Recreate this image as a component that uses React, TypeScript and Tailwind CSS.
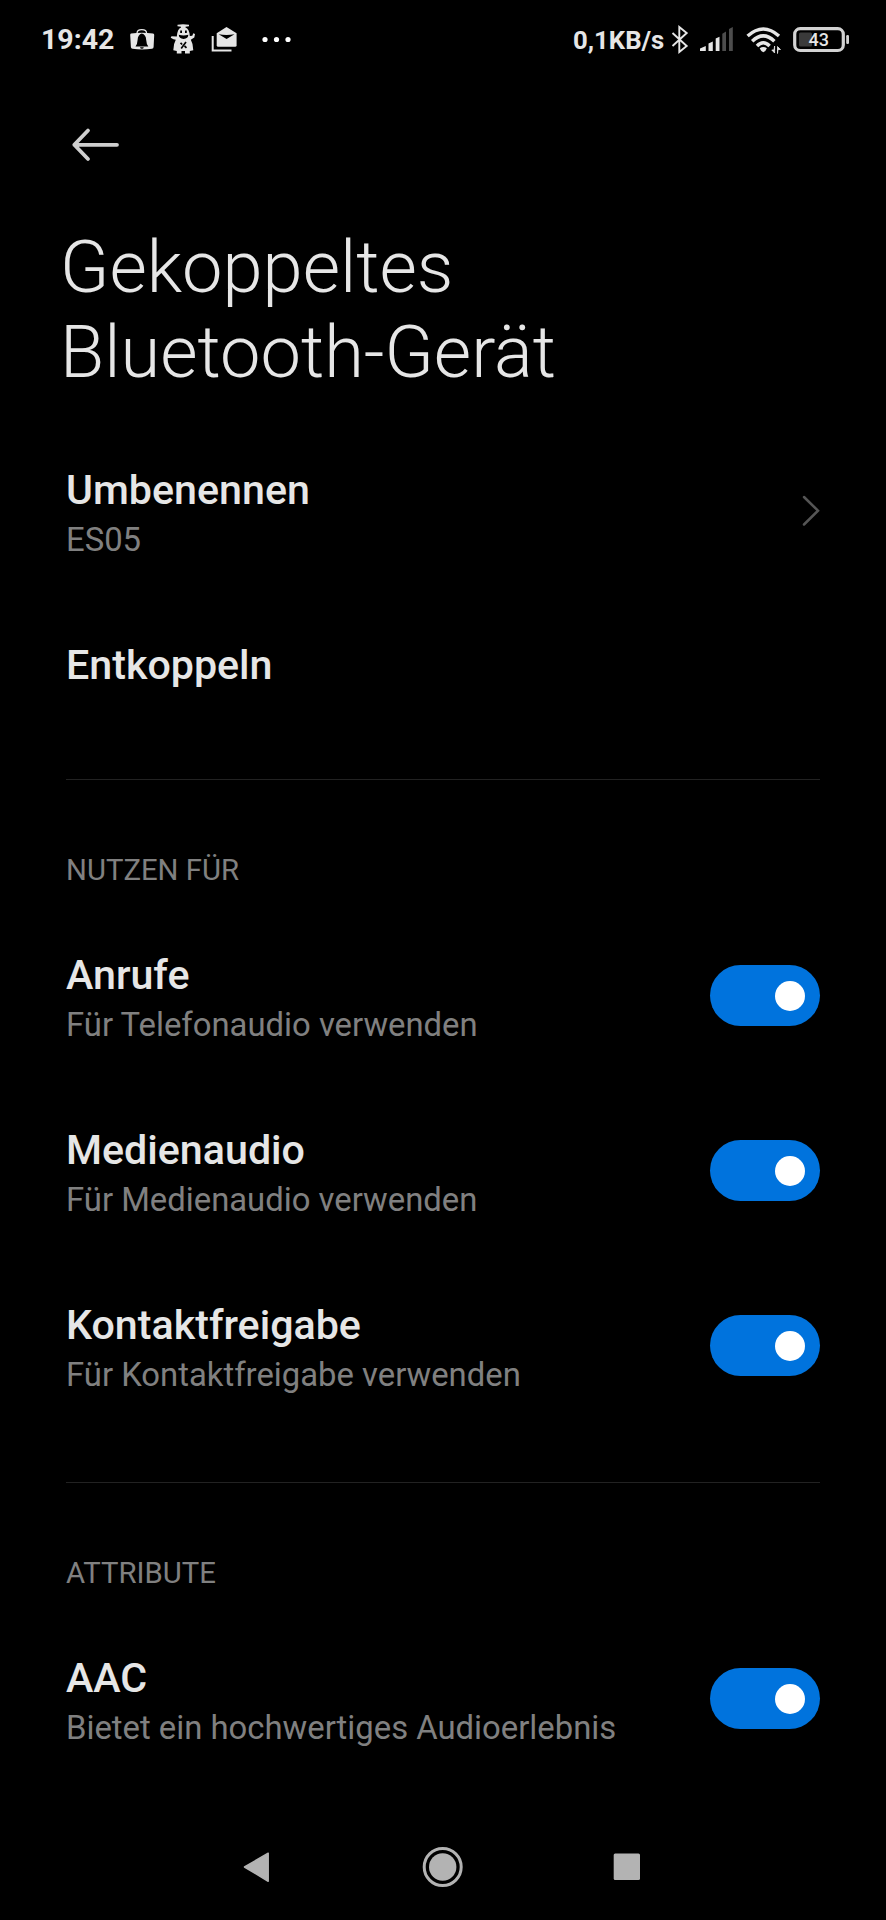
import type { ReactNode } from "react";

function StatusBar() {
  return (
    <header className="flex h-[80px] items-center justify-between pl-[41px] pr-[36px] text-[#e6e6e6]">
      <div className="flex items-center">
        <span className="w-[83px] text-[28.5px] leading-8 font-bold whitespace-nowrap">19:42</span>
        <svg className="h-[44px] w-[170px]" viewBox="124 18 170 44" fill="#e6e6e6">
          <path d="M131 33.500Q142 32 153 33.500Q154.300 33.700 154.200 35L153.600 47Q153.500 48.500 152 48.800Q142 50.200 132.500 48.800Q131 48.500 130.900 47L130.200 35Q130.200 33.700 131 33.500Z" />
          <path d="M137 33.500Q137 29.700 141.800 29.700Q146.600 29.700 146.600 33.500" fill="none" stroke="#e6e6e6" strokeWidth="1.300" />
          <path d="M141.800 33.500Q146 34.500 146.200 40Q146.400 44 148.300 46.500H135.500Q137.400 44 137.600 40Q137.800 34.500 141.800 33.500ZM140 47.200H143.800Q143.500 48.800 141.900 48.800Q140.300 48.800 140 47.200Z" fill="#000" />
          <path d="M177.500 24.800L183 24.300L189 24.800V26.300L185.500 26.800V27.600Q189.300 28.800 189.800 36L192.300 35.800L193.300 33.300L195 34L194.300 37.500L190.800 39.800Q193.300 44 193.300 50.300L189.800 51V53.500H185V51H181.500V53.500H176.800V51L173.300 50.300Q173.300 44 175.800 39.800L173.500 39.300L170.700 37.800L171.500 36.300L176.800 36.500Q177.500 28.800 181 27.600V26.800L177.500 26.300Z" />
          <path d="M178.800 34.800Q183.500 36 188.300 34.800Q188.300 38.900 183.600 38.900Q178.900 38.900 178.800 34.800ZM180.200 30.500H182V33H180.200ZM185 30.500H186.800V33H185Z" fill="#000" />
          <path d="M180.500 42.800L182.200 44.500M186 42L181.200 48.500M184.500 46L186.500 47.800" fill="none" stroke="#000" strokeWidth="1.700" />
          <path d="M212.700 36V50.500H231.500" fill="none" stroke="#e6e6e6" strokeWidth="2" />
          <path d="M216.700 33.200L226.500 27L236.600 33.200V45.200Q236.600 46.700 235 46.700H218.300Q216.700 46.700 216.700 45.200Z" />
          <path d="M218.700 34.300Q226.500 35.600 234.500 34.300L226.600 39Z" fill="#000" />
          <g fill="#fff">
            <circle cx="265" cy="39.500" r="2.600" />
            <circle cx="276.500" cy="39.500" r="2.600" />
            <circle cx="288" cy="39.500" r="2.600" />
          </g>
        </svg>
      </div>
      <div className="flex items-center">
        <span className="w-[97px] text-[25.7px] leading-8 font-bold whitespace-nowrap">0,1KB/s</span>
        <svg className="h-[44px] w-[180px]" viewBox="670 18 180 44" fill="#e6e6e6">
          <path d="M672.500 33L686.700 46L679.300 52V27L686.700 33L672.500 46" fill="none" stroke="#e6e6e6" strokeWidth="1.900" />
          <path d="M700 51V48.500L705.800 46V51ZM708.500 51V43.500L712.800 41.500V51ZM715.700 51V38.500L719.500 36.700V51Z" />
          <path d="M722.300 51V33.700L726 31.500V51ZM729 51V29L732.800 27V51Z" fill="#4d4d4d" />
          <g fill="none" stroke="#e6e6e6" strokeWidth="3.500">
            <path d="M747.600 36Q763.300 22 779 36" />
            <path d="M752.200 41.300Q763.300 30.500 774.400 41.300" />
            <path d="M757 45.900Q763.300 39.500 769.600 45.900" />
          </g>
          <path d="M759.700 48.300Q763.300 45.800 766.900 48.300Q766 51 763.300 52.200Q760.600 51 759.700 48.300Z" />
          <path d="M774.600 46V53L771.800 50H774ZM777.500 53.500V46.500L780.500 49.500H778Z" stroke="#e6e6e6" strokeWidth="0.800" />
          <rect x="799" y="32.500" width="13" height="14" rx="1.500" fill="#3a3a3a" />
          <rect x="794.700" y="28.700" width="48.600" height="21.800" rx="5.500" fill="none" stroke="#d2d2d2" strokeWidth="3.200" />
          <rect x="846.200" y="35" width="2.800" height="9" rx="1.200" fill="#d2d2d2" />
          <text x="818.800" y="46.300" textAnchor="middle" fontSize="18" fontWeight="500">43</text>
        </svg>
      </div>
    </header>
  );
}

function Toggle() {
  return (
    <button
      role="switch"
      aria-checked="true"
      className="flex h-[61px] w-[110px] shrink-0 items-center justify-end rounded-full bg-[#0073dd] pr-[15px]"
    >
      <span className="size-[30px] rounded-full bg-white" />
    </button>
  );
}

function Row({ title, detail, children }: { title: string; detail: string; children: ReactNode }) {
  return (
    <div className="flex h-[175px] items-center justify-between">
      <div className="flex flex-col gap-[7px] pt-[3px]">
        <h2 className="text-[41.2px] leading-[48px] font-medium text-[#e6e6e6]">{title}</h2>
        <p className="text-[32.85px] leading-[38px] text-[#808080]">{detail}</p>
      </div>
      {children}
    </div>
  );
}

function SectionLabel({ children }: { children: ReactNode }) {
  return <h3 className="text-[29.3px] leading-[34px] text-[#808080]">{children}</h3>;
}

export default function App() {
  return (
    <div className="flex h-[1920px] w-[886px] flex-col bg-black font-['Roboto',sans-serif]">
      <StatusBar />
      <main className="flex flex-1 flex-col px-[66px]">
        <button aria-label="Zurück" className="mt-[44px] ml-[4px] h-[42px] w-[52px]">
          <svg viewBox="70 124 52 42" className="h-full w-full" fill="none" stroke="#cfcfcf" strokeWidth="3.800" strokeLinecap="round" strokeLinejoin="round">
            <path d="M117 144.800H74.300M88 130.500L74.300 144.800L88 159" />
          </svg>
        </button>
        <h1 className="-ml-[6px] mt-[59px] text-[72.2px] leading-[85px] font-light text-[#e6e6e6]">
          Gekoppeltes
          <br />
          Bluetooth-Gerät
        </h1>
        <div className="mt-[28px]">
          <Row title="Umbenennen" detail="ES05">
            <svg viewBox="798 490 22 42" className="h-[42px] w-[22px]" fill="none" stroke="#555" strokeWidth="2.500" strokeLinecap="round">
              <path d="M804 497L818 510.700L804 524.500" />
            </svg>
          </Row>
          <div className="flex h-[135px] items-center pb-[2px]">
            <h2 className="text-[41.2px] leading-[48px] font-medium text-[#e6e6e6]">Entkoppeln</h2>
          </div>
        </div>
        <hr className="mt-[46px] mb-[73px] border-t border-[#222]" />
        <SectionLabel>NUTZEN FÜR</SectionLabel>
        <div className="mt-[21px]">
          <Row title="Anrufe" detail="Für Telefonaudio verwenden"><Toggle /></Row>
          <Row title="Medienaudio" detail="Für Medienaudio verwenden"><Toggle /></Row>
          <Row title="Kontaktfreigabe" detail="Für Kontaktfreigabe verwenden"><Toggle /></Row>
        </div>
        <hr className="mt-[49px] mb-[73px] border-t border-[#222]" />
        <SectionLabel>ATTRIBUTE</SectionLabel>
        <div className="mt-[21px]">
          <Row title="AAC" detail="Bietet ein hochwertiges Audioerlebnis"><Toggle /></Row>
        </div>
      </main>
      <nav className="flex h-[107px] pt-[33px] pl-[220px]">
        <svg viewBox="220 1846 440 42" className="h-[42px] w-[440px]" fill="#b3b3b3">
          <path d="M244.500 1867L268.200 1853.200V1881.300Z" stroke="#b3b3b3" strokeWidth="1.500" strokeLinejoin="round" />
          <circle cx="442.700" cy="1867" r="13.700" />
          <circle cx="442.700" cy="1867" r="18.500" fill="none" stroke="#b3b3b3" strokeWidth="3" />
          <rect x="613.700" y="1853.500" width="26.300" height="26.500" rx="1.500" />
        </svg>
      </nav>
    </div>
  );
}
